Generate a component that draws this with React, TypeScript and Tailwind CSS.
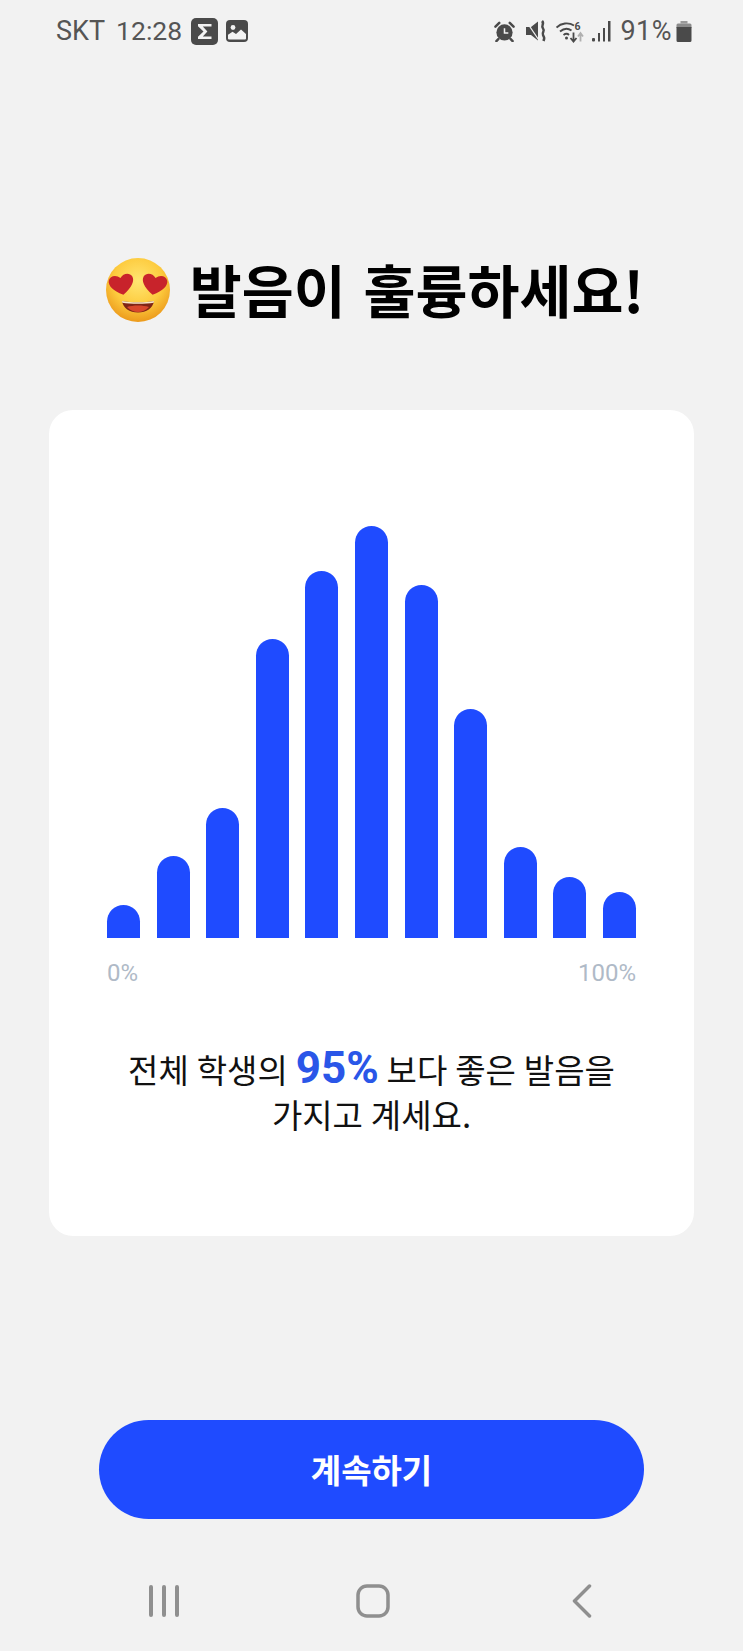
const barHeights = [33, 82, 130, 299, 367, 412, 353, 229, 91, 61, 46]

function SigmaBadge() {
  return (
    <svg width="27" height="27" viewBox="0 0 27 27">
      <rect width="27" height="27" rx="5" fill="#4a4a4a" />
      <path d="M20.500 8.500V6H7v2.200l5.500 5.300L7 18.800V21h13.500v-2.600h-8.700l4.600-4.900-4.600-5z" fill="#f2f2f2" />
    </svg>
  )
}

function ImageBadge() {
  return (
    <svg width="22" height="22" viewBox="0 0 22 22">
      <rect width="22" height="22" rx="4" fill="#4a4a4a" />
      <circle cx="7" cy="7.500" r="2.400" fill="#f2f2f2" />
      <path d="M2 18.500v-3.800l4.500-3 3.500 2.300 5-4.500 5 4.500v4.500a1 1 0 0 1-1 1H3a1 1 0 0 1-1-1z" fill="#f2f2f2" />
    </svg>
  )
}

function AlarmIcon() {
  return (
    <svg width="21" height="21" viewBox="0 0 22 22">
      <circle cx="11" cy="12" r="8.500" fill="#4a4a4a" />
      <path d="M11 7.500v5h4" stroke="#f2f2f2" strokeWidth="1.600" fill="none" />
      <path d="M1.500 6 5.500 2M20.500 6l-4-4M4.500 19l-2 2M17.500 19l2 2" stroke="#4a4a4a" strokeWidth="2.600" strokeLinecap="round" />
    </svg>
  )
}

function MuteIcon() {
  return (
    <svg width="22" height="22" viewBox="0 0 22 22">
      <path d="M1 7h5L13 1.500v19L6 15H1z" fill="#4a4a4a" />
      <path d="M1 1l13.500 20" stroke="#f2f2f2" strokeWidth="1.300" />
      <path d="M17 1c3 3-1.500 4.500 1 7.500s-1.500 3.500 0 6.500 1.500 3 .5 6" stroke="#4a4a4a" strokeWidth="2.500" fill="none" />
    </svg>
  )
}

function WifiIcon() {
  return (
    <svg width="28" height="23" viewBox="0 0 28 23">
      <path d="M.5 7.500C5 3 12.500 2 18 5.500M4 11.500C7.500 8.500 12 8 15.500 10.500M7.500 15c2-1.500 4-1.500 5.500 0" stroke="#4a4a4a" strokeWidth="1.900" fill="none" />
      <circle cx="10.500" cy="18" r="1.500" fill="#4a4a4a" />
      <path d="M17.500 12.500v9M14.500 18l3 3.500 3-3.500" stroke="#4a4a4a" strokeWidth="1.800" fill="none" />
      <path d="M24.500 21.500v-8M22 16.500l2.500-3.500 2.500 3.500" stroke="#b0b0b0" strokeWidth="1.800" fill="none" />
      <text x="18.500" y="9.500" fontSize="10.500" fontWeight="700" fill="#4a4a4a" fontFamily="Roboto, sans-serif">6</text>
    </svg>
  )
}

function SignalIcon() {
  return (
    <svg width="20" height="21" viewBox="0 0 20 21">
      <rect x="0" y="17" width="3" height="3.500" rx="1" fill="#4a4a4a" />
      <rect x="6" y="12" width="2" height="8.500" fill="#4a4a4a" />
      <rect x="11" y="7" width="2" height="13.500" fill="#4a4a4a" />
      <rect x="16" y="0" width="2.500" height="20.500" fill="#4a4a4a" />
    </svg>
  )
}

function BatteryIcon() {
  return (
    <svg width="16" height="21" viewBox="0 0 16 21">
      <path d="M4.500 0h7v2.500h-7z" fill="#9a9a9a" />
      <path d="M2 2.500h12a1.500 1.500 0 0 1 1.500 1.500v3H.5V4A1.500 1.500 0 0 1 2 2.500z" fill="#8c8c8c" />
      <path d="M.5 6h15v13.500a1.500 1.500 0 0 1-1.500 1.500H2a1.500 1.500 0 0 1-1.500-1.500z" fill="#4a4a4a" />
    </svg>
  )
}

function HeartEyes() {
  const heart = 'M0 11C-10 5-13.500-1-12-5.500c2-4.800 8.500-5 12-.5 3.500-4.500 10-4.300 12 .5C13.500-1 10 5 0 11z'
  return (
    <svg width="66" height="66" viewBox="0 0 66 66" className="shrink-0">
      <defs>
        <radialGradient id="face" cx="50%" cy="36%" r="64%">
          <stop offset="0%" stopColor="#ffe672" />
          <stop offset="60%" stopColor="#fdcb3e" />
          <stop offset="100%" stopColor="#ec9a1c" />
        </radialGradient>
      </defs>
      <circle cx="33" cy="33" r="32" fill="url(#face)" />
      <path d={heart} transform="translate(16.500 27) rotate(-10)" fill="#c8232b" />
      <path d={heart} transform="translate(49.500 27) rotate(10)" fill="#c8232b" />
      <path d="M17 44c8 1.800 24 1.800 32 0-1 7-7.500 11.500-16 11.500S18 51 17 44z" fill="#7f2416" />
      <path d="M22 50c6-2 16-2 22 0-3 3.500-7 5-11 5s-8-1.500-11-5z" fill="#d8472c" />
      <path d="M17 44c8 1.800 24 1.800 32 0l-.3 1.700c-8 1.500-23.400 1.500-31.400 0z" fill="#f8e8c8" />
    </svg>
  )
}

function RecentsIcon() {
  return (
    <svg width="32" height="32" viewBox="0 0 32 32">
      <path d="M3 2v28M16 2v28M29 2v28" stroke="#8f8f8f" strokeWidth="4" strokeLinecap="round" />
    </svg>
  )
}

function HomeIcon() {
  return (
    <svg width="34" height="34" viewBox="0 0 34 34">
      <rect x="2" y="2" width="30" height="30" rx="9" fill="none" stroke="#8f8f8f" strokeWidth="3.500" />
    </svg>
  )
}

function BackIcon() {
  return (
    <svg width="20" height="34" viewBox="0 0 20 34">
      <path d="M17.500 2 2.500 17l15 15" fill="none" stroke="#8f8f8f" strokeWidth="3.500" strokeLinecap="round" strokeLinejoin="round" />
    </svg>
  )
}

export default function App() {
  return (
    <div className="flex h-[1651px] w-[743px] flex-col overflow-hidden bg-[#f2f2f2] font-['Roboto','Noto_Sans_CJK_KR',sans-serif]">
      {/* Status bar */}
      <div className="flex h-[62px] items-center justify-between pl-[56px] pr-[51px] text-[27px] text-[#555555]">
        <div className="flex items-center">
          <span>SKT</span>
          <span className="ml-[11px] text-[26.500px]">12:28</span>
          <span className="ml-[9px] flex items-center gap-[8px]">
            <SigmaBadge />
            <ImageBadge />
          </span>
        </div>
        <div className="flex items-center">
          <AlarmIcon />
          <span className="ml-[10px]"><MuteIcon /></span>
          <span className="ml-[9px]"><WifiIcon /></span>
          <span className="ml-[8px]"><SignalIcon /></span>
          <span className="ml-[8px] tracking-[0.5px]">91%</span>
          <span className="ml-[4px]"><BatteryIcon /></span>
        </div>
      </div>

      {/* Title */}
      <div className="mt-[195px] flex h-[66px] items-center justify-center gap-[19px] pl-[6px]">
        <HeartEyes />
        <h1 className="pb-[3px] font-['Noto_Sans_CJK_KR',sans-serif] text-[56.500px] font-bold leading-none text-black [word-spacing:5px]">
          발음이 훌륭하세요!
        </h1>
      </div>

      {/* Card */}
      <div className="mx-[49px] mt-[87px] flex h-[826px] flex-col rounded-[24px] bg-white px-[58px]">
        <div className="mt-[114px] flex h-[414px] items-end justify-between">
          {barHeights.map((height, idx) => (
            <div
              key={idx}
              className="w-[33px] rounded-t-full bg-[#1f4bff]"
              style={{ height }}
            />
          ))}
        </div>
        <div className="mt-[22px] flex justify-between text-[24px] leading-[26px] text-[#afbac7]">
          <span>0%</span>
          <span>100%</span>
        </div>
        <p className="mt-[60px] text-center text-[33px] leading-[45px] text-[#111111] font-['Noto_Sans_CJK_KR',sans-serif] [word-spacing:0.5px]">
          전체 학생의{' '}
          <span className="font-['Roboto',sans-serif] text-[44px] font-bold leading-none text-[#2a56e8]">95%</span>{' '}
          보다 좋은 발음을
          <br />
          가지고 계세요.
        </p>
      </div>

      {/* Continue button */}
      <button className="mx-[99px] mt-[184px] h-[99px] rounded-full bg-[#1f4bff] font-['Noto_Sans_CJK_KR',sans-serif] text-[33px] font-bold text-white">
        계속하기
      </button>

      {/* Navigation bar */}
      <div className="ml-[148px] mt-[64px] flex h-[36px] items-center">
        <RecentsIcon />
        <span className="ml-[176px]"><HomeIcon /></span>
        <span className="ml-[182px]"><BackIcon /></span>
      </div>
    </div>
  )
}
